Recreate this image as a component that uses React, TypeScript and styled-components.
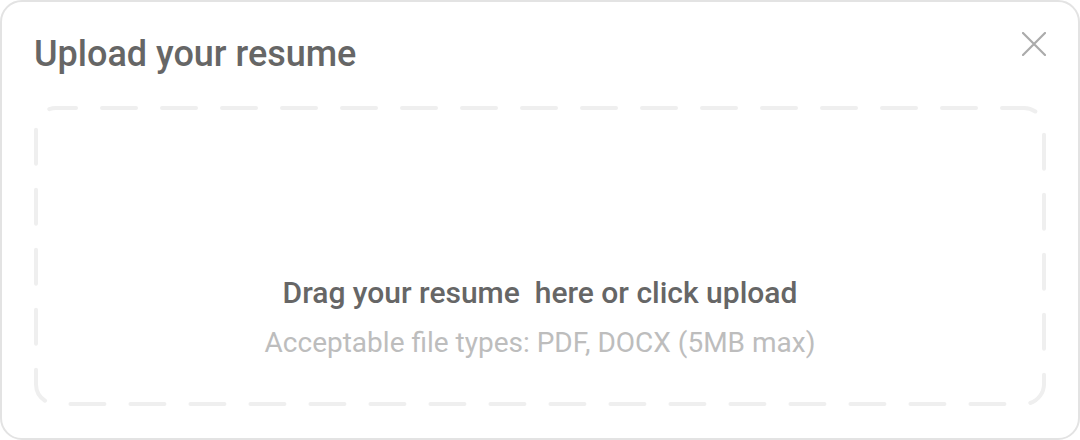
import React from "react";
import styled, { createGlobalStyle } from "styled-components";

const Global = createGlobalStyle`
  html, body { margin: 0; padding: 0; background: #ffffff; }
  * { box-sizing: border-box; }
  body { font-family: Roboto, "Liberation Sans", sans-serif; }
`;

const Card = styled.div`
  width: 1080px;
  height: 440px;
  border: 2px solid #e3e3e3;
  border-radius: 22px;
  background: #fff;
  padding: 30px 32px 32px 32px;
  display: flex;
  flex-direction: column;
  gap: 30px;
`;

const Header = styled.div`
  display: flex;
  align-items: flex-start;
  justify-content: space-between;
`;

const Title = styled.h1`
  margin: 0;
  font-size: 36px;
  line-height: 44px;
  font-weight: 500;
  color: #666666;
`;

const CloseButton = styled.button`
  border: none;
  background: transparent;
  padding: 0;
  margin-top: 0;
  width: 24px;
  height: 24px;
  display: flex;
  align-items: center;
  justify-content: center;
  cursor: pointer;
`;

const DropZone = styled.div`
  position: relative;
  flex: 1;
  display: flex;
  flex-direction: column;
  align-items: center;
  justify-content: flex-end;
  padding-bottom: 46px;
  border-radius: 22px;
`;

const DashFrame = styled.svg`
  position: absolute;
  inset: 0;
  width: 100%;
  height: 100%;
  pointer-events: none;
  overflow: visible;
`;

const Primary = styled.div`
  font-size: 30px;
  line-height: 36px;
  font-weight: 500;
  color: #666666;
  white-space: pre;
`;

const Secondary = styled.div`
  margin-top: 15px;
  font-size: 28px;
  line-height: 34px;
  font-weight: 400;
  color: #bdbdbd;
`;

export default function App() {
  return (
    <>
      <Global />
      <Card>
        <Header>
          <Title>Upload your resume</Title>
          <CloseButton aria-label="Close">
            <svg width="24" height="24" viewBox="0 0 24 24" fill="none">
              <path d="M1 1L23 23M23 1L1 23" stroke="#ababab" strokeWidth="2.2" strokeLinecap="round" />
            </svg>
          </CloseButton>
        </Header>
        <DropZone>
          <DashFrame preserveAspectRatio="none">
            <rect
              x="2"
              y="2"
              width="calc(100% - 4px)"
              height="calc(100% - 4px)"
              rx="20"
              ry="20"
              fill="none"
              stroke="#efefef"
              strokeWidth="4"
              strokeDasharray="34 26"
              strokeDashoffset="14"
              strokeLinecap="round"
            />
          </DashFrame>
          <Primary>{"Drag your resume  here or click upload"}</Primary>
          <Secondary>Acceptable file types: PDF, DOCX (5MB max)</Secondary>
        </DropZone>
      </Card>
    </>
  );
}
